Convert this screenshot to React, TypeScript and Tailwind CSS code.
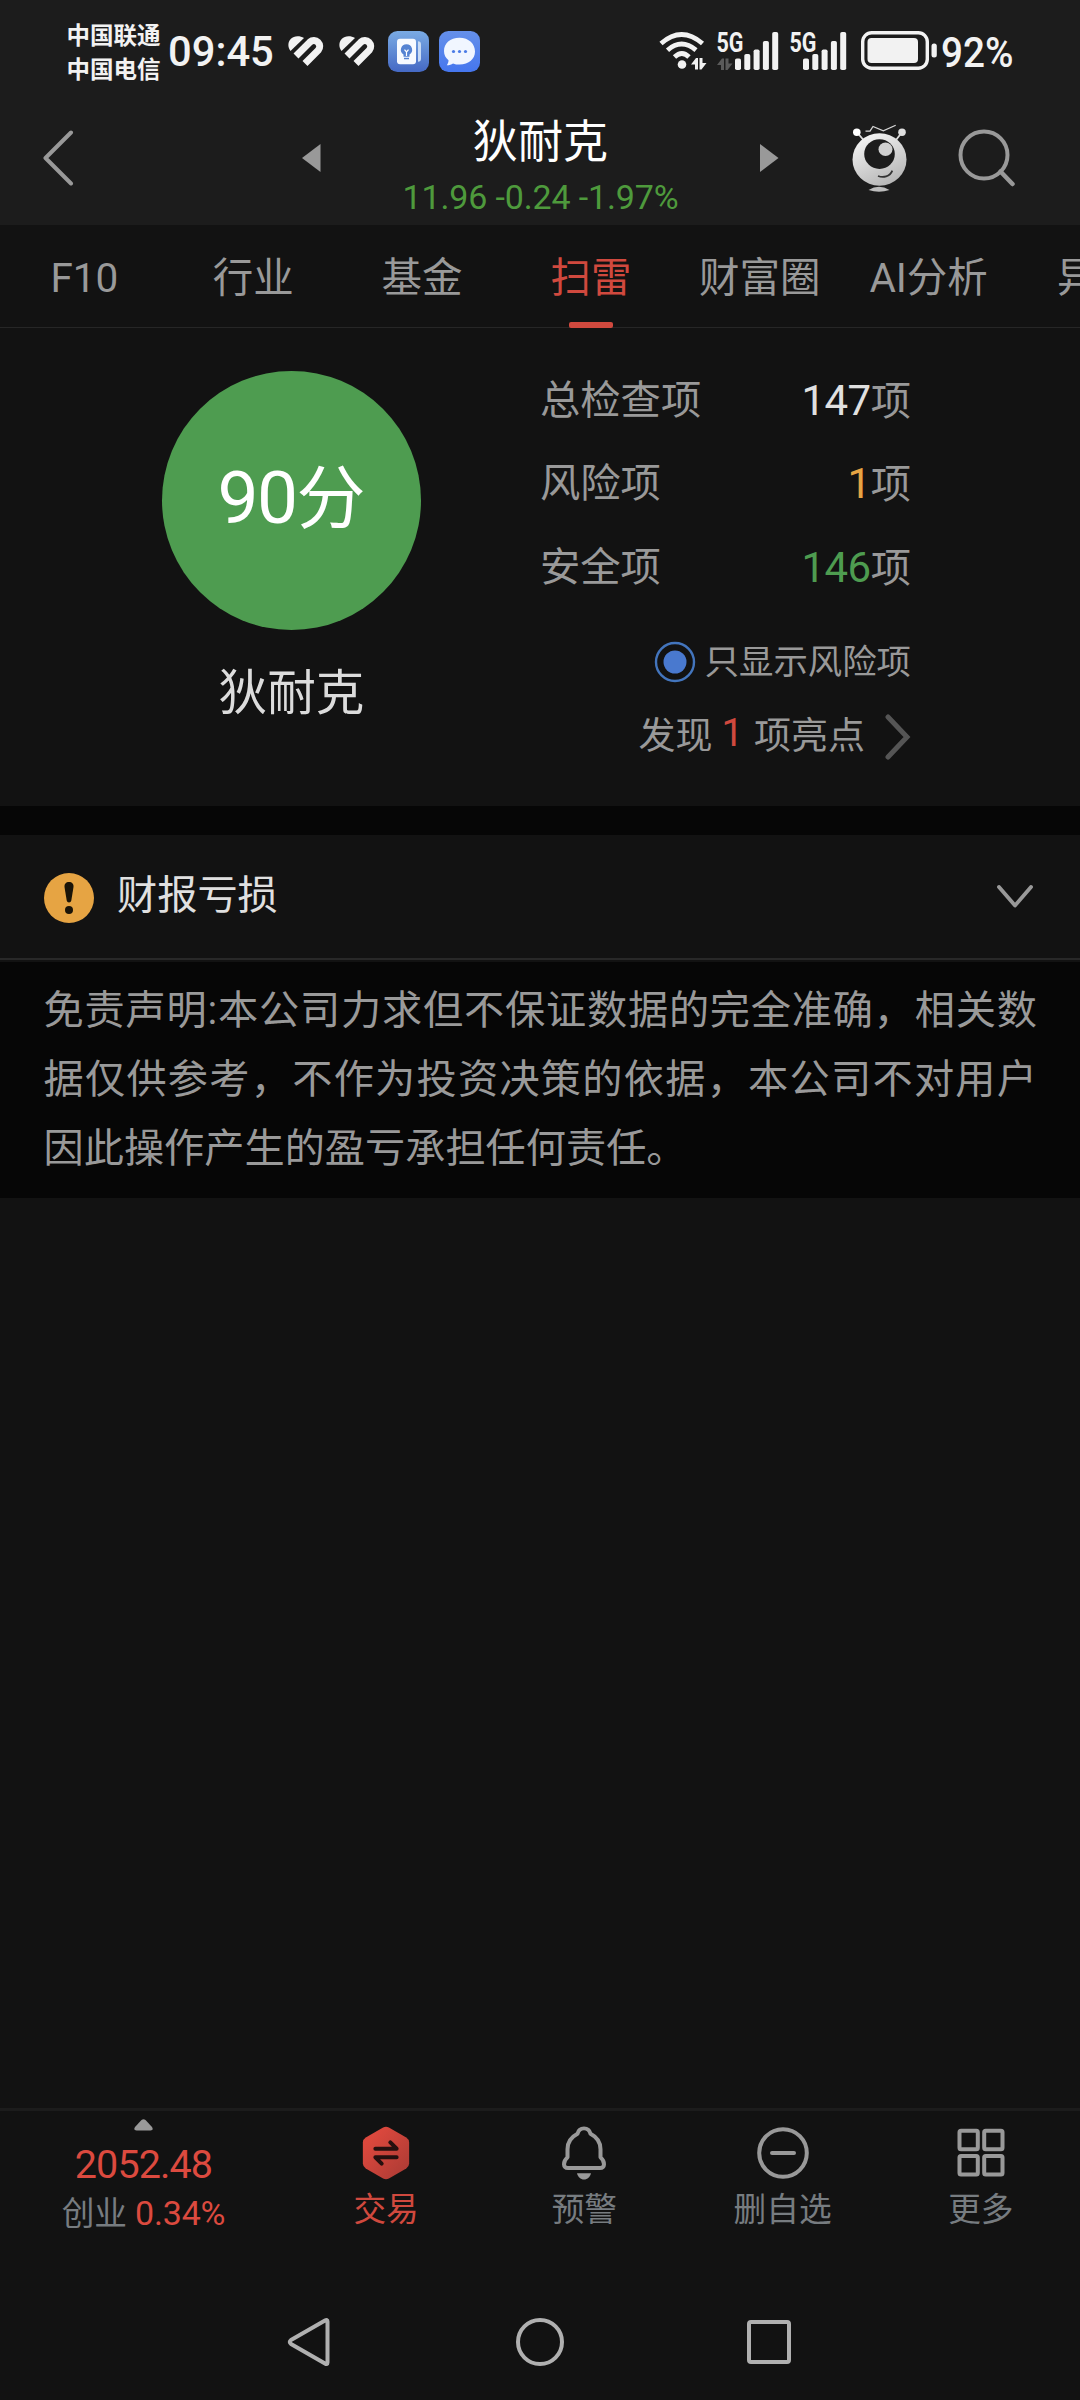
import type { ReactNode } from 'react'

const GRAY = '#999999'

const tabs = ['F10', '行业', '基金', '扫雷', '财富圈', 'AI分析', '异动']

const checks = [
  { label: '总检查项', value: 147, color: 'text-[#e0e0e0]' },
  { label: '风险项', value: 1, color: 'text-[#e6a443]' },
  { label: '安全项', value: 146, color: 'text-[#4e9c50]' },
]

function HeartIcon() {
  return (
    <svg width="37" height="31" viewBox="0 0 37 31" fill="none">
      <path d="M2.5 15C-2.5 8 2 0.300 9.500 0.300C12 0.300 14 .8 16 2Z" fill="#f2f2f2" />
      <path d="M8 20L22 6A5.850 5.850 0 0 1 30.300 14.200L17 27.500" stroke="#f2f2f2" strokeWidth="7" />
    </svg>
  )
}

function BulbAppIcon() {
  return (
    <svg width="41" height="41" viewBox="0 0 41 42" preserveAspectRatio="none">
      <defs>
        <linearGradient id="bulb" x1="0" y1="0" x2="0" y2="1">
          <stop offset="0" stopColor="#7aabe4" />
          <stop offset="1" stopColor="#4569c4" />
        </linearGradient>
      </defs>
      <rect width="41" height="42" rx="9.500" fill="url(#bulb)" />
      <path d="M30 10.500q3 0 3 3v15q0 3-3 3z" fill="#c9dcf5" />
      <rect x="9" y="8" width="19" height="26" rx="3" fill="#f7faff" />
      <path d="M18.500 13.500a5.700 5.700 0 0 0-3 10.500v2.500h6v-2.500a5.700 5.700 0 0 0-3-10.500z" fill="#5583d2" />
      <path d="M16.500 19l2 2.500l2-2.500M18.500 21.500v4" stroke="#fff" strokeWidth="1.200" fill="none" />
      <path d="M16 28.200h5" stroke="#5583d2" strokeWidth="1.500" />
    </svg>
  )
}

function MessageAppIcon() {
  return (
    <svg width="41" height="41" viewBox="0 0 41 42" preserveAspectRatio="none">
      <defs>
        <linearGradient id="msg" x1="0" y1="0" x2="0" y2="1">
          <stop offset="0" stopColor="#6590ea" />
          <stop offset="1" stopColor="#4576ee" />
        </linearGradient>
      </defs>
      <rect width="41" height="42" rx="9.500" fill="url(#msg)" />
      <path d="M20.500 7C11 7 5 13 5 20.500c0 4 1.500 7 4.500 9.500c0 2-.5 3.500-1.700 5c2.700 0 4.700-.6 6.200-1.800c2 .8 4 1.200 6.500 1.200C30 34.400 36 28.500 36 21S30 7 20.500 7z" fill="#f1f6ff" />
      <circle cx="14.500" cy="21" r="1.600" fill="#4b7be6" />
      <circle cx="20.500" cy="21" r="1.600" fill="#4b7be6" />
      <circle cx="26.500" cy="21" r="1.600" fill="#4b7be6" />
    </svg>
  )
}

function DataArrows({ x, y, color }: { x: number; y: number; color: string }) {
  return (
    <g transform={`translate(${x} ${y})`} fill={color}>
      <path d="M0 7L5 0.500H7V12H4V7Z" />
      <path d="M15.500 5.500L10.500 12H8.500V0.500H11.500V5.500Z" />
    </g>
  )
}

function WifiIcon() {
  return (
    <svg width="48" height="38" viewBox="0 0 48 38" fill="none">
      <path d="M2 11.500Q22.500 -6.500 43.500 11.500" stroke="#f2f2f2" strokeWidth="4.800" />
      <path d="M8.500 18.200Q22.500 6 37 18.200" stroke="#f2f2f2" strokeWidth="4.800" />
      <path d="M15.500 25Q23 18 30 25" stroke="#f2f2f2" strokeWidth="4.800" />
      <circle cx="23" cy="32.500" r="4.300" fill="#f2f2f2" />
      <DataArrows x={32} y={25.5} color="#f2f2f2" />
    </svg>
  )
}

function SignalIcon({ arrows = false }: { arrows?: boolean }) {
  const start = arrows ? 18 : 13
  const heights = [11.5, 16, 20.5, 29, 38]
  return (
    <svg className="overflow-visible" width={start + 43} height="38" viewBox={`0 0 ${start + 43} 38`}>
      <text
        x="-0.500"
        y="20"
        textLength="27"
        lengthAdjust="spacingAndGlyphs"
        className="font-['Roboto',sans-serif] text-[27px] font-bold"
        fill="#f2f2f2"
      >
        5G
      </text>
      {arrows && <DataArrows x={0} y={26} color="#5a5a5a" />}
      {heights.map((h, i) => (
        <rect key={h} x={start + i * 9.3} y={38 - h} width="6" height={h} rx="1.800" fill="#f2f2f2" />
      ))}
    </svg>
  )
}

function BatteryIcon() {
  return (
    <svg width="76" height="39" viewBox="0 0 76 39">
      <rect x="1.700" y="1.700" width="64.600" height="35.600" rx="9" fill="none" stroke="#f2f2f2" strokeWidth="3.400" />
      <rect x="6.500" y="7" width="50.500" height="25" rx="4" fill="#f2f2f2" />
      <rect x="70.500" y="12.500" width="5.300" height="14" rx="2.500" fill="#f2f2f2" />
    </svg>
  )
}

function StatusBar() {
  return (
    <div className="flex h-[104px] items-start pt-[20px] text-[#f2f2f2]">
      <div className="ml-[66.500px] w-[95.500px] text-[23.500px] leading-[33.500px] font-bold whitespace-nowrap">
        <div>中国联通</div>
        <div>中国电信</div>
      </div>
      <div className="ml-[6px] flex h-[63px] items-center">
        <span className="w-[107px] origin-left scale-x-[0.97] text-[43px] leading-none font-medium whitespace-nowrap">
          09:45
        </span>
        <div className="ml-[13px] flex items-center gap-[14px]">
          <HeartIcon />
          <HeartIcon />
        </div>
        <div className="ml-3 flex items-center gap-[10px]">
          <BulbAppIcon />
          <MessageAppIcon />
        </div>
      </div>
      <div className="ml-[179px] flex h-[61px] items-center">
        <WifiIcon />
        <div className="ml-[10px]">
          <SignalIcon arrows />
        </div>
        <div className="ml-[12px]">
          <SignalIcon />
        </div>
        <div className="ml-[15px]">
          <BatteryIcon />
        </div>
        <span className="mt-[3px] ml-[4px] w-[80px] origin-left scale-x-[0.9] text-[43px] leading-none font-medium">
          92%
        </span>
      </div>
    </div>
  )
}

function RobotIcon() {
  return (
    <svg width="56" height="68" viewBox="0 0 56 70" preserveAspectRatio="none" fill="none">
      <defs>
        <linearGradient id="robot" x1="0.200" y1="0" x2="0.700" y2="1">
          <stop offset="0" stopColor="#f6f6f6" />
          <stop offset="1" stopColor="#b4b4b4" />
        </linearGradient>
      </defs>
      <path d="M5 8.500L11.500 16.500M50 8.500L44 16.500" stroke="#dcdcdc" strokeWidth="1.800" />
      <circle cx="4.800" cy="8.500" r="3.800" fill="#fff" />
      <circle cx="50" cy="8.500" r="3.800" fill="#dedede" />
      <path d="M13.500 7.300H18L21 2.500L31.300 7L43.700 1.300" stroke="#d6d6d6" strokeWidth="1.300" />
      <circle cx="27.500" cy="36.500" r="27" fill="url(#robot)" />
      <circle cx="27.500" cy="31" r="15.300" fill="#1c1c1c" />
      <circle cx="33.500" cy="26" r="7" fill="#cfcfcf" />
      <path d="M26 53.500C31 55.500 38 54.500 40.300 48" stroke="#333" strokeWidth="1.700" />
      <path d="M16.500 68Q27 61 37.500 68Q27 71.500 16.500 68Z" fill="#bdbdbd" />
    </svg>
  )
}

function Header() {
  return (
    <header className="h-[225px] bg-[#1c1c1c]">
      <StatusBar />
      <div className="flex h-[107px] items-center">
        <svg className="ml-[43px]" width="31" height="56" viewBox="0 0 31 56" fill="none">
          <path d="M28 2.500L2.500 28L28 53.500" stroke={GRAY} strokeWidth="4" strokeLinecap="round" strokeLinejoin="round" />
        </svg>
        <svg className="ml-[228px]" width="19" height="28" viewBox="0 0 19 28">
          <path d="M0 14L18.500 0V28Z" fill={GRAY} />
        </svg>
        <div className="flex h-full w-[439px] flex-col items-center pt-[9px] whitespace-nowrap">
          <span className="text-[45px] leading-[60px] text-white">狄耐克</span>
          <span className="text-[34px] leading-[48px] tracking-[-0.150px] text-[#4e9a3c]">11.96 -0.24 -1.97%</span>
        </div>
        <svg width="19" height="28" viewBox="0 0 19 28">
          <path d="M18.500 14L0 0V28Z" fill={GRAY} />
        </svg>
        <div className="ml-[73px]">
          <RobotIcon />
        </div>
        <svg className="ml-[50px]" width="58" height="58" viewBox="0 0 58 58" fill="none">
          <circle cx="26" cy="26" r="23.500" stroke={GRAY} strokeWidth="4" />
          <path d="M42.500 42.500L54.500 55" stroke={GRAY} strokeWidth="4.500" strokeLinecap="round" />
        </svg>
      </div>
    </header>
  )
}

function Tabs() {
  return (
    <nav className="flex h-[103px] overflow-hidden shadow-[inset_0_-1px_#262626]">
      {tabs.map((tab) => {
        const active = tab === '扫雷'
        return (
          <div key={tab} className="flex w-[168.850px] shrink-0 flex-col items-center">
            <span
              className={`h-[97px] text-[40.500px] leading-[106px] whitespace-nowrap ${active ? 'text-[#d0493e]' : 'text-[#999999]'}`}
            >
              {tab}
            </span>
            {active && <div className="h-[6px] w-[44px] rounded-[2px] bg-[#d0493e]" />}
          </div>
        )
      })}
    </nav>
  )
}

function Summary() {
  return (
    <section className="flex h-[478px] text-[#999999]">
      <div className="ml-[162px] flex w-[259px] flex-col items-center pt-[43px]">
        <div className="flex h-[259px] w-[259px] items-center justify-center rounded-full bg-[#4e9c50] pb-[5px] text-[69px] leading-none whitespace-nowrap text-white">
          <span>
            <span className="text-[73px] tracking-[-1.500px]">90</span>分
          </span>
        </div>
        <div className="mt-[29px] text-[48.500px] leading-[70px] text-[#dcdcdc]">狄耐克</div>
      </div>
      <div className="ml-[119px] w-[371px] pt-[31px] text-[40.300px]">
        {checks.map((c) => (
          <div key={c.label} className="flex h-[83.600px] items-center justify-between leading-none">
            <span>{c.label}</span>
            <span>
              <span className={`text-[42px] tracking-[-0.500px] ${c.color}`}>{c.value}</span>项
            </span>
          </div>
        ))}
        <div className="mt-[16px] flex h-[72px] items-center justify-end gap-[9px] text-[34.400px] leading-none">
          <svg width="42" height="42" viewBox="0 0 42 42">
            <circle cx="21" cy="21" r="19" fill="none" stroke="#4375bd" strokeWidth="2.400" />
            <circle cx="21" cy="21" r="11.500" fill="#4979cf" />
          </svg>
          只显示风险项
        </div>
        <div className="flex h-[78px] items-center justify-end text-[37px] leading-none">
          <span>
            发现
            <span className="mr-[12px] ml-[9px] inline-block -translate-y-[3px] text-[39px] tracking-[-1.500px] text-[#d0493e]">1</span>
            项亮点
          </span>
          <svg className="ml-[20px]" width="26" height="48" viewBox="0 0 26 48" fill="none">
            <path d="M3 4L22 24L3 44" stroke="#555" strokeWidth="5" strokeLinecap="round" />
          </svg>
        </div>
      </div>
    </section>
  )
}

function RiskRow() {
  return (
    <section className="flex h-[125px] items-center border-b-2 border-[#282828] pr-[47px] pl-[44px]">
      <svg className="mt-[2px]" width="50" height="50" viewBox="0 0 50 50">
        <circle cx="25" cy="25" r="25" fill="#e6a443" />
        <path d="M25 9C28 9 29.800 11 29.500 14L27.300 27.500C26.800 30 23.200 30 22.700 27.500L20.500 14C20.200 11 22 9 25 9Z" fill="#1a1408" />
        <circle cx="25" cy="37" r="4" fill="#1a1408" />
      </svg>
      <span className="ml-[23px] text-[40.200px] leading-none text-[#e0e0e0]">财报亏损</span>
      <svg className="ml-auto" width="36" height="24" viewBox="0 0 36 24" fill="none">
        <path d="M2 2L18 20.500L34 2" stroke={GRAY} strokeWidth="3.800" strokeLinecap="round" strokeLinejoin="round" />
      </svg>
    </section>
  )
}

function TradeIcon() {
  return (
    <svg width="50" height="54" viewBox="0 0 50 56">
      <defs>
        <linearGradient id="trade" x1="0" y1="0" x2="1" y2="1">
          <stop offset="0.200" stopColor="#dc483d" />
          <stop offset="1" stopColor="#a83a34" />
        </linearGradient>
      </defs>
      <path d="M22 1.500Q25 0 28 1.500L46 12Q49 14 49 17V39Q49 42 46 44L28 54.500Q25 56 22 54.500L4 44Q1 42 1 39V17Q1 14 4 12Z" fill="url(#trade)" />
      <path d="M14 23.500H36L29.500 17M36 32.500H14L20.500 39" fill="none" stroke="#24100f" strokeWidth="4.200" strokeLinecap="round" strokeLinejoin="round" />
    </svg>
  )
}

function BellIcon() {
  return (
    <svg width="46" height="54" viewBox="0 0 46 56" preserveAspectRatio="none" fill="none">
      <path
        d="M16.500 8C17.500 4 20 2.500 23 2.500S28.500 4 29.500 8C36 11.500 39.500 17 39.500 24V32.500C44.500 37 44 43.500 39 43.500H7C2 43.500 1.500 37 6.500 32.500V24C6.500 17 10 11.500 16.500 8Z"
        stroke={GRAY}
        strokeWidth="4"
        strokeLinejoin="round"
      />
      <path d="M16 49H30C29 53 26.500 55.500 23 55.500S17 53 16 49Z" fill={GRAY} />
    </svg>
  )
}

function MinusIcon() {
  return (
    <svg width="52" height="54" viewBox="0 0 52 54" fill="none" stroke={GRAY} strokeWidth="4">
      <circle cx="26" cy="27" r="23.800" />
      <path d="M15 27H37" strokeLinecap="round" />
    </svg>
  )
}

function GridIcon() {
  return (
    <svg width="48" height="54" viewBox="0 0 48 54" fill="none" stroke={GRAY} strokeWidth="4">
      <rect x="2.500" y="4.700" width="18.300" height="18.500" rx="1.500" />
      <rect x="27.200" y="4.700" width="18.300" height="18.500" rx="1.500" />
      <rect x="2.500" y="30" width="18.300" height="18.500" rx="1.500" />
      <rect x="27.200" y="30" width="18.300" height="18.500" rx="1.500" />
    </svg>
  )
}

function Action({ icon, label, className = 'text-[#777c80]' }: { icon: ReactNode; label: string; className?: string }) {
  return (
    <div className={`flex w-[198.300px] flex-col items-center pt-[15px] ${className}`}>
      {icon}
      <span className="mt-[8px] text-[32.700px] leading-[44px] whitespace-nowrap">{label}</span>
    </div>
  )
}

function BottomBar() {
  return (
    <footer className="flex h-[168px] border-t-[3px] border-[#1c1c1c]">
      <div className="flex w-[287px] flex-col items-center pt-[8px]">
        <svg width="19" height="12" viewBox="0 0 19 12">
          <path d="M7.500 1Q9.500 -.5 11.500 1L18 8Q20 11.500 16.500 11.500H2.500Q-1 11.500 1 8Z" fill={GRAY} />
        </svg>
        <span className="mt-[9px] text-[39.500px] leading-[50px] tracking-[-0.900px] text-[#dc4a3f]">2052.48</span>
        <span className="text-[32.700px] leading-[47px] whitespace-nowrap text-[#777c80]">
          创业 <span className="text-[34px] tracking-[-0.200px] text-[#dc4a3f]">0.34%</span>
        </span>
      </div>
      <Action icon={<TradeIcon />} label="交易" className="text-[#d0493e]" />
      <Action icon={<BellIcon />} label="预警" />
      <Action icon={<MinusIcon />} label="删自选" />
      <Action icon={<GridIcon />} label="更多" />
    </footer>
  )
}

function SystemNav() {
  return (
    <div className="flex h-[124px] items-center pt-[8px] pl-[287px]">
      <svg width="44" height="50" viewBox="0 0 44 50" fill="none">
        <path d="M38 3.500Q40.500 2 40.500 4.500V45.500Q40.500 48 38 46.500L4 27Q1.500 25 4 23Z" stroke="#b0b0b0" strokeWidth="4" strokeLinejoin="round" />
      </svg>
      <div className="ml-[185px] h-[48px] w-[48px] rounded-full border-4 border-[#b0b0b0]" />
      <div className="ml-[183px] h-[44px] w-[44px] rounded-[4px] border-4 border-[#b0b0b0]" />
    </div>
  )
}

export default function App() {
  return (
    <div className="flex h-[2400px] w-[1080px] flex-col overflow-hidden bg-[#121212] font-['Roboto','Noto_Sans_CJK_SC',sans-serif]">
      <Header />
      <Tabs />
      <Summary />
      <div className="h-[29px] bg-[#060606]" />
      <RiskRow />
      <p className="mt-[2px] h-[236px] bg-[#060606] pt-[14px] pr-[43px] pl-[43.500px] text-justify text-[40.200px] leading-[69.100px] text-[#999999]">
        免责声明:本公司力求但不保证数据的完全准确，相关数据仅供参考，不作为投资决策的依据，本公司不对用户因此操作产生的盈亏承担任何责任。
      </p>
      <main className="flex-1" />
      <BottomBar />
      <SystemNav />
    </div>
  )
}
